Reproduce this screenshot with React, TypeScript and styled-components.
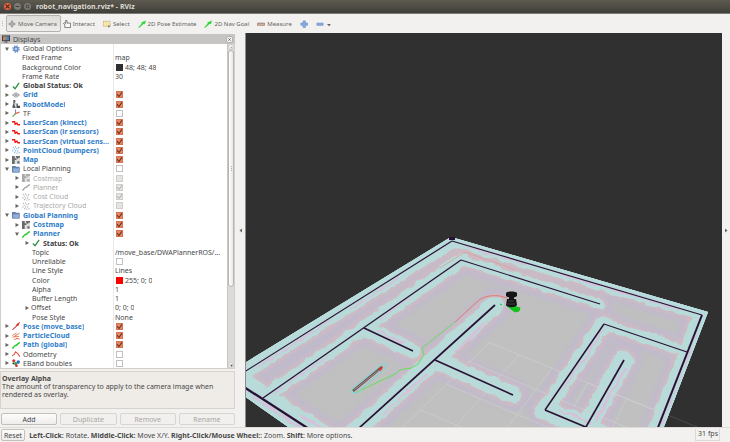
import React from "react";
import styled, { createGlobalStyle, css } from "styled-components";

const GlobalStyle = createGlobalStyle`
  html, body, #root { height: 100%; }
  body {
    margin: 0;
    overflow: hidden;
    background: #f2f1f0;
    color: #484848;
    font: 7px/9px "Noto Sans", "Open Sans", sans-serif;
  }
  * { box-sizing: border-box; }
  button { font: inherit; color: inherit; margin: 0; }
`;

const checkMark = encodeURIComponent(
  '<svg xmlns="http://www.w3.org/2000/svg" viewBox="0 0 14 14"><path d="M2 6l4 5 7-10" fill="none" stroke="#6b3320" stroke-width="2.2"/></svg>'
);
const greyMark = encodeURIComponent(
  '<svg xmlns="http://www.w3.org/2000/svg" viewBox="0 0 14 14"><path d="M2 6l4 5 7-10" fill="none" stroke="#b0aca8" stroke-width="2"/></svg>'
);

const Page = styled.div`
  display: flex;
  flex-direction: column;
  height: 100vh;
`;

const TitleBar = styled.header`
  display: flex;
  align-items: center;
  flex: 0 0 14px;
  gap: 3px;
  padding: 0 4px;
  background: linear-gradient(#5d5a50, #403f3a);
  border-bottom: 1px solid #7d7b76;
`;

const WindowButton = styled.button<{ $close?: boolean }>`
  display: flex;
  width: 7px;
  height: 7px;
  padding: 1px;
  border: 0;
  border-radius: 50%;
  background: ${(p) => (p.$close ? "#ea6440" : "#7c7a72")};
  svg { width: 5px; height: 5px; }
`;

const Title = styled.h1`
  margin: 0 0 0 2px;
  color: #dfdbd2;
  font-size: 7px;
  line-height: 9px;
  font-weight: 700;
  white-space: pre;
`;

const Toolbar = styled.nav`
  display: flex;
  align-items: center;
  flex: 0 0 19px;
  padding: 0 2px;
  gap: 6px;
  font-size: 6px;
  line-height: 8px;
`;

const Grip = styled.span`
  width: 1px;
  height: 5px;
  border-left: 1px dotted #bbb;
  margin-right: -3px;
`;

const Tool = styled.button<{ $active?: boolean }>`
  display: flex;
  align-items: center;
  gap: 2px;
  height: 17px;
  padding: 0;
  border: 1px solid transparent;
  border-radius: 2px;
  background: none;
  color: #66645f;
  white-space: nowrap;
  svg { width: 8px; height: 8px; flex: none; }
  ${(p) =>
    p.$active &&
    css`
      padding: 0 3px 0 1px;
      margin-right: -5px;
      border-color: #b5b1ac;
      background: linear-gradient(#dedcd9, #efedeb);
    `}
`;

const Body = styled.div`
  display: flex;
  flex: 1;
  min-height: 0;
`;

const Dock = styled.aside`
  display: flex;
  flex-direction: column;
  flex: 0 0 235px;
  min-width: 0;
  padding-top: 1px;
`;

const DockHeader = styled.div`
  display: flex;
  align-items: center;
  flex: 0 0 10px;
  gap: 3px;
  padding: 0 2px;
  background: #c6c5c4;
  > svg { width: 8px; height: 8px; }
`;

const DockTitle = styled.h2`
  flex: 1;
  margin: 0;
  font-size: 7px;
  line-height: 9px;
  font-weight: 400;
`;

const CloseButton = styled.button`
  display: flex;
  padding: 1px;
  width: 7px;
  height: 7px;
  border: 1px solid #b5b1ac;
  border-radius: 2px;
  background: #f4f3f1;
  svg { width: 100%; height: 100%; }
`;

const TreeArea = styled.div`
  display: flex;
  flex: 1;
  min-height: 0;
  border: 1px solid #d2cfcb;
  border-top: 0;
`;

const Tree = styled.table`
  flex: 1;
  display: grid;
  grid-auto-rows: minmax(9px, 1fr);
  background: #fff;
  min-width: 0;
  tbody { display: contents; }
`;

const Row = styled.tr`
  display: grid;
  grid-template-columns: 113px minmax(0, 1fr);
`;

type Tone = "normal" | "on" | "off" | "strong";
const toneColor: Record<Tone, string> = { normal: "#484848", on: "#2f7dc9", off: "#a9a9a9", strong: "#404040" };

const NameCell = styled.td<{ $level: number; $tone: Tone }>`
  display: flex;
  align-items: center;
  min-width: 0;
  padding: 0 0 0 ${(p) => p.$level * 10 + 1}px;
  border-right: 1px solid #e8e8e8;
  color: ${(p) => toneColor[p.$tone]};
  font-weight: ${(p) => (p.$tone === "on" || p.$tone === "strong" ? 700 : 400)};
  > svg { width: 8px; height: 8px; flex: none; margin: 0 3px 0 1px; }
`;

const Name = styled.span`
  overflow: hidden;
  text-overflow: ellipsis;
  white-space: nowrap;
`;

const Expander = styled.button<{ $open?: boolean }>`
  display: flex;
  align-items: center;
  justify-content: center;
  flex: 0 0 9px;
  height: 9px;
  padding: 0;
  border: 0;
  background: none;
  svg { width: 4px; height: 4px; transform: ${(p) => (p.$open ? "rotate(90deg)" : "none")}; }
`;

const Spacer = styled.span`
  flex: 0 0 10px;
`;

const ValueCell = styled.td`
  display: flex;
  align-items: center;
  gap: 2px;
  min-width: 0;
  padding: 0 1px;
`;

const CheckBox = styled.input`
  appearance: none;
  width: 7px;
  height: 7px;
  margin: 0 1px;
  border: 1px solid #c3c0bd;
  background-color: #fff;
  &:checked {
    border-color: #cf7556;
    background: #ee8460 url("data:image/svg+xml,${checkMark}") border-box;
  }
  &:disabled { background-color: #e6e4e2; border-color: #d0cecb; }
  &:disabled:checked { background-image: url("data:image/svg+xml,${greyMark}"); }
`;

const Swatch = styled.i<{ $color: string }>`
  flex: none;
  width: 7px;
  height: 7px;
  margin-left: 1px;
  background: ${(p) => p.$color};
`;

const Scrollbar = styled.div`
  display: flex;
  flex-direction: column;
  justify-content: space-between;
  flex: 0 0 7px;
  border-left: 1px solid #c9c6c2;
  background: #dddad7;
`;

const ScrollStep = styled.button`
  display: flex;
  flex: 0 0 6px;
  align-items: center;
  justify-content: center;
  padding: 0;
  border: 1px solid #cfccc8;
  border-radius: 3px;
  background: #f6f5f4;
  svg { width: 3px; height: 3px; }
`;

const ScrollTrack = styled.div`
  display: flex;
  flex-direction: column;
  flex: 1;
`;

const ScrollThumb = styled.div`
  display: flex;
  flex: 0 0 76%;
  align-items: center;
  justify-content: center;
  border: 1px solid #b9b5b0;
  border-radius: 3px;
  background: linear-gradient(90deg, #fff, #e9e7e5);
  &::after { content: ""; height: 5px; border-left: 1px dotted #aaa; }
`;

const Help = styled.section`
  flex: 0 0 38px;
  margin-top: 2px;
  padding: 2px 1px;
  border: 1px solid #d6d2cd;
  background: #efebe7;
  line-height: 8px;
`;

const HelpTitle = styled.h3`
  margin: 0;
  font-size: 7px;
  line-height: 9px;
  font-weight: 700;
`;

const HelpText = styled.p`
  margin: 0;
`;

const Actions = styled.div`
  display: grid;
  grid-template-columns: repeat(4, 1fr);
  gap: 3px;
  margin: 4px 0 2px 1px;
`;

const Action = styled.button`
  height: 12px;
  padding: 0;
  border: 1px solid #c3bfba;
  border-radius: 2px;
  background: linear-gradient(#fcfcfb, #efedeb);
  line-height: 9px;
  &:disabled { color: #a9a6a3; border-color: #d8d5d1; background: #f2f0ee; }
`;

const Handle = styled.button<{ $width: number }>`
  display: flex;
  align-items: center;
  justify-content: center;
  flex: 0 0 ${(p) => p.$width}px;
  padding: 0;
  border: 0;
  background: #f2f1f0;
  svg { width: 3px; height: 5px; }
`;

const View = styled.main`
  flex: 1;
  min-width: 0;
  background: #303030;
  border-left: 1px solid #8d8d8b;
  svg { display: block; width: 100%; height: 100%; }
`;

const StatusBar = styled.footer`
  display: flex;
  align-items: center;
  flex: 0 0 15px;
  gap: 4px;
  padding: 0 10px 0 1px;
  border-top: 1px solid #dedbd8;
`;

const ResetButton = styled(Action)`
  padding: 0 2px;
`;

const Hint = styled.p`
  flex: 1;
  margin: 0;
  white-space: nowrap;
`;

const Rate = styled.output`
  padding: 0 1px 2px 2px;
  border: 1px solid #dbd8d5;
  border-width: 0 1px 1px;
`;

/* ---------- icons ---------- */

const box = { viewBox: "0 0 18 18", fill: "none", "aria-hidden": true } as const;

const Arrow = () => (
  <svg viewBox="0 0 8 8" aria-hidden="true"><path d="M1 0l7 4-7 4z" fill="#66645f" /></svg>
);
const Cross = ({ color }: { color: string }) => (
  <svg viewBox="0 0 8 8" aria-hidden="true"><path d="M1 1l6 6M7 1L1 7" stroke={color} strokeWidth="1.8" /></svg>
);
const MoveIcon = () => (
  <svg {...box}>
    <path d="M9 0l3 4H6zM9 18l3-4H6zM0 9l4-3v6zM18 9l-4-3v6z" fill="#999" />
    <path d="M5 6h8v6H5zM9 3v12M3 9h12" stroke="#8c8c8c" strokeWidth="1.5" />
  </svg>
);
const HandIcon = () => (
  <svg {...box}>
    <path d="M4 17V10L1 8l2-2 3 2V1h3v6h8v10z" fill="#f8f8f7" stroke="#555" strokeWidth="1.6" strokeLinejoin="round" />
  </svg>
);
const SelectIcon = () => (
  <svg {...box}>
    <path d="M1 3h15v11H1z" fill="#fae8a9" stroke="#9c905f" strokeWidth="1.4" strokeDasharray="2 1" />
    <path d="M12 11l5 5h-3l-2 2z" fill="#6b6960" />
  </svg>
);
const GoalIcon = () => (
  <svg {...box}><path d="M1 17l8-9-1-2 9-4-2 7-2-1-9 8z" fill="#22d52b" stroke="#22d52b" /></svg>
);
const MeasureIcon = () => (
  <svg {...box}><path d="M1 7h16v5H1z" fill="#dcb6a0" stroke="#8c7265" strokeWidth="1.5" /><path d="M5 7v2M9 7v2M13 7v2" stroke="#8c7265" /></svg>
);
const PlusIcon = () => (
  <svg {...box}><path d="M7 2h5v5h5v5h-5v5H7v-5H2V7h5z" fill="#86aadd" stroke="#6d92d0" strokeWidth="1.5" /></svg>
);
const MinusIcon = () => (
  <svg {...box}><path d="M2 7h14v5H2z" fill="#86aadd" stroke="#6d92d0" strokeWidth="1.5" /></svg>
);
const DisplayIcon = () => (
  <svg {...box}>
    <path d="M0 1h18v13H0z" fill="#3a3a3a" />
    <path d="M2 3h5v9H2z" fill="#d8786c" /><path d="M7 3h4v9H7z" fill="#62b56c" /><path d="M11 3h5v9h-5z" fill="#5d78cc" />
    <path d="M7 14h4v2h3v1H4v-1h3z" fill="#555" />
  </svg>
);

const IconArt = ({ kind, muted }: { kind: string; muted?: boolean }) => {
  const c = (color: string) => (muted ? "#a8a8a8" : color);
  switch (kind) {
    case "gear":
      return (
        <svg {...box}>
          <circle cx="9" cy="9" r="7" stroke="#7f9fd2" strokeWidth="3.5" strokeDasharray="3 2.5" />
          <circle cx="9" cy="9" r="4.5" fill="#b9cdeb" stroke="#6289c6" strokeWidth="3" />
        </svg>
      );
    case "check":
      return <svg {...box}><path d="M2 10l5 5 9-13" stroke="#35904a" strokeWidth="3" /></svg>;
    case "grid":
      return <svg {...box}><path d="M1 9l8-5 8 5-8 5zM5 6.5l8 5M13 6.5l-8 5" stroke="#6d6d6d" strokeWidth="1.5" /></svg>;
    case "robot":
      return (
        <svg {...box}>
          <path d="M3 0h4l1 4-3 4 2 6H1l2-6zM1 14h7v4H1z" fill="#5e5e5e" />
          <path d="M10 8h3v5h5v5h-8z" fill="#4a4a4a" /><path d="M5 6l5 5" stroke="#888" strokeWidth="2" />
        </svg>
      );
    case "tf":
      return (
        <svg {...box}>
          <path d="M8 11V1" stroke="#5c74ce" strokeWidth="2" /><path d="M8 11l-7 6" stroke="#48b24a" strokeWidth="2.5" />
          <path d="M6 11l11-4" stroke="#e0674f" strokeWidth="2.5" />
        </svg>
      );
    case "laser":
      return <svg {...box}><path d="M0 6h6l1 6 4-3 2 4h5" stroke="#f01717" strokeWidth="3.2" strokeLinejoin="round" /></svg>;
    case "cloud":
      return (
        <svg {...box}>
          <g fill={c("#6eafd8")}>
            {[[3, 3], [8, 2], [5, 7], [11, 6], [15, 4], [8, 11], [2, 11], [13, 11], [6, 15], [11, 16], [16, 15]].map(([x, y]) => (
              <circle key={`${x}-${y}`} cx={x} cy={y} r="1.5" />
            ))}
          </g>
        </svg>
      );
    case "map":
      return (
        <svg {...box}>
          <path d="M0 0h18v18H0z" fill="#dedede" />
          <path d="M0 0h6v18H0zM6 5h4v4H6zM9 0h9v4h-4v2h-3V4H9zM12 12h5v5h-5z" fill={muted ? "#a8a8a8" : "#6a6a6a"} />
        </svg>
      );
    case "folder":
      return (
        <svg {...box}>
          <path d="M0 2h8l1 2h8v13H0z" fill="#6582ac" />
          <path d="M2 7h15l-1 9H2z" fill="#92b2dc" stroke="#5878a5" />
        </svg>
      );
    case "path":
      return <svg {...box}><path d="M0 16c6 0 2-5 8-6s4-6 10-6" stroke={c("#22cf2a")} strokeWidth="3.2" /></svg>;
    case "pose":
      return <svg {...box}><path d="M1 17L11 8 10 6l7-5-4 8-1-1L2 17z" fill="#cf2b22" stroke="#cf2b22" strokeWidth="1.5" /></svg>;
    case "particles":
      return (
        <svg {...box}>
          <path d="M1 8l9-6M7 8l10-5M1 12l9-4M5 11l11-1M4 17l10-3M9 14l8 2" stroke="#e5643f" strokeWidth="1.8" />
        </svg>
      );
    case "odom":
      return <svg {...box}><path d="M0 13l5-3 3-6 5 4 5 7" stroke="#e05045" strokeWidth="2.5" /></svg>;
    case "array":
      return (
        <svg {...box}>
          <circle cx="4" cy="4" r="3.5" fill="#d8332c" /><circle cx="14" cy="7" r="4" fill="#2d70c5" />
          <circle cx="8" cy="10" r="3.5" fill="#2ba33a" /><circle cx="10" cy="15" r="3" fill="#c7322c" /><circle cx="3" cy="10" r="2" fill="#333" />
        </svg>
      );
    default:
      return null;
  }
};

/* ---------- property tree ---------- */

interface Item {
  name: string;
  level?: number;
  icon?: string;
  open?: boolean;
  leaf?: boolean;
  tone?: Tone;
  checked?: boolean;
  value?: string;
  swatch?: string;
}

const items: Item[] = [
  { name: "Global Options", icon: "gear", open: true },
  { name: "Fixed Frame", level: 1, leaf: true, value: "map" },
  { name: "Background Color", level: 1, leaf: true, value: "48; 48; 48", swatch: "#303030" },
  { name: "Frame Rate", level: 1, leaf: true, value: "30" },
  { name: "Global Status: Ok", icon: "check", tone: "strong" },
  { name: "Grid", icon: "grid", tone: "on", checked: true },
  { name: "RobotModel", icon: "robot", tone: "on", checked: true },
  { name: "TF", icon: "tf", checked: false },
  { name: "LaserScan (kinect)", icon: "laser", tone: "on", checked: true },
  { name: "LaserScan (ir sensors)", icon: "laser", tone: "on", checked: true },
  { name: "LaserScan (virtual sens...", icon: "laser", tone: "on", checked: true },
  { name: "PointCloud (bumpers)", icon: "cloud", tone: "on", checked: true },
  { name: "Map", icon: "map", tone: "on", checked: true },
  { name: "Local Planning", icon: "folder", open: true, checked: false },
  { name: "Costmap", level: 1, icon: "map", tone: "off", checked: false },
  { name: "Planner", level: 1, icon: "path", tone: "off", checked: true },
  { name: "Cost Cloud", level: 1, icon: "cloud", tone: "off", checked: true },
  { name: "Trajectory Cloud", level: 1, icon: "cloud", tone: "off", checked: false },
  { name: "Global Planning", icon: "folder", open: true, tone: "on", checked: true },
  { name: "Costmap", level: 1, icon: "map", tone: "on", checked: true },
  { name: "Planner", level: 1, icon: "path", open: true, tone: "on", checked: true },
  { name: "Status: Ok", level: 2, icon: "check", tone: "strong" },
  { name: "Topic", level: 2, leaf: true, value: "/move_base/DWAPlannerROS/..." },
  { name: "Unreliable", level: 2, leaf: true, checked: false },
  { name: "Line Style", level: 2, leaf: true, value: "Lines" },
  { name: "Color", level: 2, leaf: true, value: "255; 0; 0", swatch: "#ff0000" },
  { name: "Alpha", level: 2, leaf: true, value: "1" },
  { name: "Buffer Length", level: 2, leaf: true, value: "1" },
  { name: "Offset", level: 2, value: "0; 0; 0" },
  { name: "Pose Style", level: 2, leaf: true, value: "None" },
  { name: "Pose (move_base)", icon: "pose", tone: "on", checked: true },
  { name: "ParticleCloud", icon: "particles", tone: "on", checked: true },
  { name: "Path (global)", icon: "path", tone: "on", checked: true },
  { name: "Odometry", icon: "odom", checked: false },
  { name: "EBand boubles", icon: "array", checked: false },
];

const PropertyRow = ({ item }: { item: Item }) => {
  const { name, level = 0, icon, open, leaf, tone = "normal", checked, value, swatch } = item;
  return (
    <Row>
      <NameCell $level={level} $tone={tone}>
        {leaf ? <Spacer /> : <Expander $open={open} aria-label={`Toggle ${name}`} aria-expanded={!!open}><Arrow /></Expander>}
        {icon && <IconArt kind={icon} muted={tone === "off"} />}
        <Name>{name}</Name>
      </NameCell>
      <ValueCell>
        {checked !== undefined && (
          <CheckBox type="checkbox" aria-label={name} defaultChecked={checked} disabled={tone === "off"} />
        )}
        {swatch && <Swatch $color={swatch} />}
        {value && <Name>{value}</Name>}
      </ValueCell>
    </Row>
  );
};

/* ---------- 3D scene ---------- */

const outline = "M230 372L451 237 708 312 655 450H321L230 386z";
const walls: { d: string; w: number; line: number }[] = [
  { d: "M230 381L452 241", w: 14, line: 1.2 },
  { d: "M452 241L702 315", w: 10, line: 1.1 },
  { d: "M702 315L650 448", w: 17, line: 2 },
  { d: "M263 398L461 260", w: 14, line: 1.3 },
  { d: "M461 260L600 304", w: 9, line: 1.1 },
  { d: "M364 328L413 351", w: 15, line: 1.5 },
  { d: "M230 378L340 449", w: 25, line: 2.3 },
  { d: "M337 448L495 305", w: 18, line: 1.7 },
  { d: "M435 360L513 395", w: 17, line: 1.6 },
  { d: "M687 352L604 324", w: 11, line: 1.1 },
  { d: "M604 324L545 410", w: 16, line: 1.5 },
  { d: "M545 410L600 433", w: 20, line: 1.7 },
  { d: "M574 448L624 360", w: 20, line: 1.7 },
];

const Halo = ({ color, extra, filter }: { color: string; extra: number; filter: string }) => (
  <g stroke={color} strokeLinecap="round" filter={filter}>
    {walls.map((w) => <path key={w.d} d={w.d} strokeWidth={w.w + extra} />)}
  </g>
);

const Scene = () => (
  <svg viewBox="246 33 476 394" preserveAspectRatio="xMidYMid slice" fill="none" role="img" aria-label="Robot navigation map">
    <defs>
      <clipPath id="floor"><path d={outline} /></clipPath>
      <filter id="rough" filterUnits="userSpaceOnUse" x="230" y="220" width="510" height="230" colorInterpolationFilters="sRGB">
        <feTurbulence type="fractalNoise" baseFrequency="0.1" numOctaves="2" seed="4" />
        <feDisplacementMap in="SourceGraphic" scale="6" xChannelSelector="R" yChannelSelector="G" />
      </filter>
      <filter id="soft" filterUnits="userSpaceOnUse" x="230" y="220" width="510" height="230" colorInterpolationFilters="sRGB">
        <feGaussianBlur stdDeviation="2" />
      </filter>
    </defs>
    <path d={outline} fill="#c0c0c0" />
    <g clipPath="url(#floor)">
      <Halo color="#c0bacc" extra={16} filter="url(#soft)" />
      <Halo color="#cfbbc2" extra={5} filter="url(#soft)" />
      <Halo color="#b8dad9" extra={0} filter="url(#rough)" />
      <g stroke="#d6c0da" strokeWidth="1.5" filter="url(#rough)">
        <path d="M256 368L330 321M350 309L400 277M272 395L330 355M380 319L410 298M465 246L530 265M560 274L680 309" />
        <path d="M252 397L300 427M300 415l20 12" strokeWidth="2.5" />
        <path d="M382 415L427 374M455 352L487 321M604 329L563 390M560 410l30 13" strokeWidth="2" />
        <path d="M698 335L663 424M595 422L625 368M378 331l25 12" strokeWidth="2.5" />
      </g>
      <path d={outline} stroke="#b6dfdf" strokeWidth="3" />
      <g stroke="#d2d2d4" strokeWidth="0.7" opacity="0.8">
        <path d="M403 427L490 342M455 427L519 355M508 427L552 368M468 361L640 433M446 384L570 437M421 410L470 431M488 342L700 429" />
        <path d="M574 407L588 383 663 413M613 427L627 398" />
      </g>
      <g stroke="#2b1035" strokeLinejoin="round">
        {walls.map((w) => <path key={w.d} d={w.d} strokeWidth={w.line} />)}
      </g>
      <path d="M440 268L465 252 516 270" stroke="#dda09a" strokeWidth="0.8" />
    </g>
    <path d="M449 237h6v3h-6z" fill="#2b1035" />
    <path d="M670 416L697 427" stroke="#555" strokeWidth="0.7" />
    <path d="M455 322L478 301C484 296 492 295 500 296L507 298" stroke="#e87865" />
    <path d="M455 322L422 348 424 355 418 364 411 368 400 370 395 374 355 393" stroke="#65df57" />
    <path d="M351 392l2-4 29-24h4v4l-29 25z" stroke="#72d9de" strokeWidth="1" />
    <path d="M353 391L382 367" stroke="#67534f" strokeWidth="2.4" />
    <path d="M354 390L379 370" stroke="#b09a95" strokeWidth="0.8" />
    <path d="M378 369l5-3-2 5z" fill="#d63728" />
    <path d="M506 305l5 4 4 3 4-1 1-3-6-2-8-1M500 304l2 1" fill="#13c21b" stroke="#13c21b" />
    <g fill="#151515">
      <path d="M506 293c1-2 10-2 11 0v3c-2 2-9 2-11 0z" />
      <path d="M509 296h5v4h-5zM507 299h9l1 6c-2 3-9 3-11 0z" />
      <path d="M508 301h6M507 304h8" stroke="#555" strokeWidth="0.7" />
    </g>
  </svg>
);

export default function App() {
  return (
    <Page>
      <GlobalStyle />
      <TitleBar>
        <WindowButton $close aria-label="Close"><Cross color="#4b2418" /></WindowButton>
        <WindowButton aria-label="Minimize"><svg viewBox="0 0 8 8"><path d="M1 4h6" stroke="#3c3b37" strokeWidth="1.5" /></svg></WindowButton>
        <WindowButton aria-label="Maximize"><svg viewBox="0 0 8 8"><path d="M2 2h4v4H2z" fill="none" stroke="#3c3b37" strokeWidth="1.2" /></svg></WindowButton>
        <Title>robot_navigation.rviz* - RViz</Title>
      </TitleBar>
      <Toolbar aria-label="Tools">
        <Grip />
        <Tool $active><MoveIcon />Move Camera</Tool>
        <Tool><HandIcon />Interact</Tool>
        <Tool><SelectIcon />Select</Tool>
        <Tool><GoalIcon />2D Pose Estimate</Tool>
        <Tool><GoalIcon />2D Nav Goal</Tool>
        <Tool><MeasureIcon />Measure</Tool>
        <Tool aria-label="Add tool"><PlusIcon /></Tool>
        <Tool aria-label="Remove tool">
          <MinusIcon />
          <svg {...box}><path d="M2 9h9l-4 5z" fill="#66645f" /></svg>
        </Tool>
      </Toolbar>
      <Body>
        <Dock>
          <DockHeader>
            <DisplayIcon />
            <DockTitle>Displays</DockTitle>
            <CloseButton aria-label="Close panel"><Cross color="#333" /></CloseButton>
          </DockHeader>
          <TreeArea>
            <Tree>
              <tbody>{items.map((item, i) => <PropertyRow key={i} item={item} />)}</tbody>
            </Tree>
            <Scrollbar>
              <ScrollStep aria-label="Scroll up"><svg viewBox="0 0 8 8"><path d="M0 6h8L4 1z" fill="#aaa" /></svg></ScrollStep>
              <ScrollTrack><ScrollThumb /></ScrollTrack>
              <ScrollStep aria-label="Scroll down"><svg viewBox="0 0 8 8"><path d="M0 2h8L4 7z" fill="#555" /></svg></ScrollStep>
            </Scrollbar>
          </TreeArea>
          <Help>
            <HelpTitle>Overlay Alpha</HelpTitle>
            <HelpText>The amount of transparency to apply to the camera image when rendered as overlay.</HelpText>
          </Help>
          <Actions>
            <Action>Add</Action>
            <Action disabled>Duplicate</Action>
            <Action disabled>Remove</Action>
            <Action disabled>Rename</Action>
          </Actions>
        </Dock>
        <Handle $width={10} aria-label="Collapse left panel"><svg viewBox="0 0 6 10"><path d="M6 1v8L1 5z" fill="#66645f" /></svg></Handle>
        <View><Scene /></View>
        <Handle $width={8} aria-label="Expand right panel"><svg viewBox="0 0 6 10"><path d="M0 1v8l5-4z" fill="#66645f" /></svg></Handle>
      </Body>
      <StatusBar>
        <ResetButton>Reset</ResetButton>
        <Hint>
          <b>Left-Click:</b> Rotate. <b>Middle-Click:</b> Move X/Y. <b>Right-Click/Mouse Wheel:</b>: Zoom. <b>Shift</b>: More options.
        </Hint>
        <Rate>31 fps</Rate>
      </StatusBar>
    </Page>
  );
}
